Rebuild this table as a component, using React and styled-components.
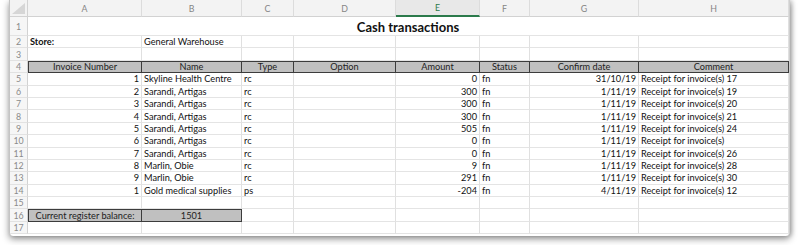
import React from "react"
import styled, { createGlobalStyle, css } from "styled-components"

const GlobalStyle = createGlobalStyle`
  html, body {
    margin: 0;
    padding: 0;
    background: #ffffff;
  }
  body {
    font-family: Lato, "Liberation Sans", Arial, sans-serif;
    overflow: hidden;
  }
`

const Page = styled.div`
  width: 800px;
  height: 245px;
  padding-left: 9px;
  box-sizing: border-box;
`

const Window = styled.div`
  width: 781px;
  height: 236px;
  overflow: hidden;
  background: #fff;
  border-left: 1px solid #c4c4c4;
  border-right: 1px solid #cfcfcf;
  border-radius: 0 0 4px 4px;
  box-shadow: 0 3px 7px rgba(0, 0, 0, 0.42), 2px 0 4px rgba(0, 0, 0, 0.18);
  box-sizing: border-box;
`

const Sheet = styled.div`
  display: grid;
  grid-template-columns: 18px 114px 100px 52px 102px 84px 50px 109px 150px;
  grid-template-rows: 17px 19px repeat(16, 12.4px);
  font-size: 9.2px;
  color: #111;
`

const Corner = styled.div`
  background: #f3f3f3;
  border-right: 1px solid #d2d2d2;
  border-bottom: 1px solid #d2d2d2;
  display: flex;
  align-items: flex-end;
  justify-content: flex-end;
  padding: 0 2px 2px 0;
  box-sizing: border-box;
`

const ColHead = styled.div`
  background: ${(p) => (p.$active ? "#e8e8e8" : "#f3f3f3")};
  color: ${(p) => (p.$active ? "#2b7a4b" : "#858585")};
  border-right: 1px solid #dcdcdc;
  border-bottom: ${(p) => (p.$active ? "2px solid #2b7a4b" : "1px solid #d2d2d2")};
  display: flex;
  align-items: center;
  justify-content: center;
  box-sizing: border-box;
  font-size: 8.8px;
`

const RowHead = styled.div`
  background: #f6f6f6;
  color: #8a8a8a;
  border-right: 1px solid #d2d2d2;
  border-bottom: 1px solid #e2e2e2;
  display: flex;
  align-items: center;
  justify-content: center;
  box-sizing: border-box;
  font-size: 8.8px;
`

const Cell = styled.div`
  border-right: 1px solid #e0e0e0;
  border-bottom: 1px solid #e4e4e4;
  display: flex;
  align-items: center;
  justify-content: ${(p) =>
    p.$align === "right" ? "flex-end" : p.$align === "center" ? "center" : "flex-start"};
  padding: 0 2px;
  white-space: nowrap;
  overflow: visible;
  box-sizing: border-box;
  font-weight: ${(p) => (p.$bold ? 700 : 400)};

  ${(p) =>
    p.$boxed &&
    css`
      background: #c0c0c0;
      border-top: 1.5px solid #3c3c3c;
      border-bottom: 1.5px solid #3c3c3c;
      border-right: ${p.$last ? "1.5px" : "1px"} solid #3c3c3c;
      border-left: ${p.$first ? "1.5px solid #3c3c3c" : "none"};
      color: #222;
    `}
`

const Title = styled(Cell)`
  grid-column: 2 / span 8;
  justify-content: center;
  font-size: 13px;
  font-weight: 700;
  padding-top: 2px;
`

const CornerMark = () => (
  <svg width="13" height="11" viewBox="0 0 13 11">
    <polygon points="13,0 13,11 0,11" fill="#d6d6d6" />
  </svg>
)

const columns = ["A", "B", "C", "D", "E", "F", "G", "H"]

const rows = [
  [1, "Skyline Health Centre", "rc", 0, "31/10/19", "Receipt for invoice(s) 17"],
  [2, "Sarandi, Artigas", "rc", 300, "1/11/19", "Receipt for invoice(s) 19"],
  [3, "Sarandi, Artigas", "rc", 300, "1/11/19", "Receipt for invoice(s) 20"],
  [4, "Sarandi, Artigas", "rc", 300, "1/11/19", "Receipt for invoice(s) 21"],
  [5, "Sarandi, Artigas", "rc", 505, "1/11/19", "Receipt for invoice(s) 24"],
  [6, "Sarandi, Artigas", "rc", 0, "1/11/19", "Receipt for invoice(s)"],
  [7, "Sarandi, Artigas", "rc", 0, "1/11/19", "Receipt for invoice(s) 26"],
  [8, "Marlin, Obie", "rc", 9, "1/11/19", "Receipt for invoice(s) 28"],
  [9, "Marlin, Obie", "rc", 291, "1/11/19", "Receipt for invoice(s) 30"],
  [1, "Gold medical supplies", "ps", -204, "4/11/19", "Receipt for invoice(s) 12"],
]

const headers = ["Invoice Number", "Name", "Type", "Option", "Amount", "Status", "Confirm date", "Comment"]

const EmptyRow = () => columns.map((c) => <Cell key={c} />)

export default function App() {
  return (
    <Page>
      <GlobalStyle />
      <Window>
        <Sheet>
          <Corner>
            <CornerMark />
          </Corner>
          {columns.map((c) => (
            <ColHead key={c} $active={c === "E"}>
              {c}
            </ColHead>
          ))}

          <RowHead>1</RowHead>
          <Title>Cash transactions</Title>

          <RowHead>2</RowHead>
          <Cell $bold>Store:</Cell>
          <Cell>General Warehouse</Cell>
          {columns.slice(2).map((c) => (
            <Cell key={c} />
          ))}

          <RowHead>3</RowHead>
          <EmptyRow />

          <RowHead>4</RowHead>
          {headers.map((h, i) => (
            <Cell key={h} $boxed $align="center" $first={i === 0} $last={i === headers.length - 1}>
              {h}
            </Cell>
          ))}

          {rows.map((r, i) => (
            <React.Fragment key={i}>
              <RowHead>{i + 5}</RowHead>
              <Cell $align="right">{r[0]}</Cell>
              <Cell>{r[1]}</Cell>
              <Cell>{r[2]}</Cell>
              <Cell />
              <Cell $align="right">{r[3]}</Cell>
              <Cell>fn</Cell>
              <Cell $align="right">{r[4]}</Cell>
              <Cell>{r[5]}</Cell>
            </React.Fragment>
          ))}

          <RowHead>15</RowHead>
          <EmptyRow />

          <RowHead>16</RowHead>
          <Cell $boxed $first $align="center">
            Current register balance:
          </Cell>
          <Cell $boxed $last $align="center">
            1501
          </Cell>
          {columns.slice(2).map((c) => (
            <Cell key={c} />
          ))}

          <RowHead>17</RowHead>
          <EmptyRow />
        </Sheet>
      </Window>
    </Page>
  )
}
